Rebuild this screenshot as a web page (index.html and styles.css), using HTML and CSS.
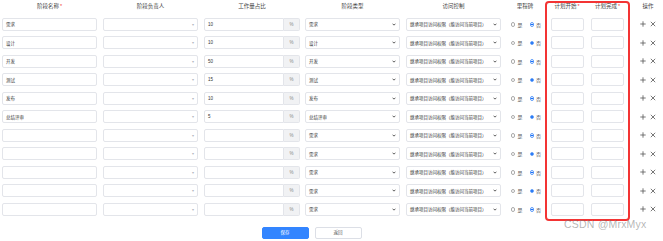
FILE: index.html
```html
<!DOCTYPE html>
<html lang="zh">

<head>
    <meta charset="UTF-8">
    <title>阶段计划</title>
    <link rel="stylesheet" href="styles.css">
</head>

<body>
    <div class="table">
        <!-- 表头 -->
        <div class="th">阶段名称<i>*</i></div>
        <div class="th">阶段负责人</div>
        <div class="th">工作量占比</div>
        <div class="th">阶段类型</div>
        <div class="th">访问控制</div>
        <div class="th">里程碑</div>
        <div class="th">计划开始<i>*</i></div>
        <div class="th">计划完成<i>*</i></div>
        <div class="th th-op">操作</div>
    </div>
    <div class="table" id="rows"></div>

    <div class="btns">
        <a href="javascript:;" class="btn btn-primary">保存</a>
        <a href="javascript:;" class="btn">返回</a>
    </div>

    <!-- 红色标注框 -->
    <div class="mark"></div>
    <div class="watermark">CSDN @MrxMyx</div>

    <script>
        // 阶段数据
        let stages = [
            ['需求', '10', '需求'],
            ['设计', '10', '设计'],
            ['开发', '50', '开发'],
            ['测试', '15', '测试'],
            ['发布', '10', '发布'],
            ['总结评审', '5', '总结评审'],
            ['', '', '需求'],
            ['', '', '需求'],
            ['', '', '需求'],
            ['', '', '需求'],
            ['', '', '需求']
        ];
        let chevron = '<svg class="chev" viewBox="0 0 6 4" width="4" height="3"><path d="M0.8 0.8 L3 3 L5.2 0.8" fill="none" stroke="#333" stroke-width="1.2"/></svg>';
        let plus = '<svg viewBox="0 0 6 6" width="6" height="6"><path d="M3 0.3 V5.7 M0.3 3 H5.7" stroke="#555" stroke-width="0.8"/></svg>';
        let cross = '<svg viewBox="0 0 6 6" width="6" height="6"><path d="M0.8 0.8 L5.2 5.2 M5.2 0.8 L0.8 5.2" stroke="#555" stroke-width="0.8"/></svg>';
        let html = '';
        for (let i = 0; i < stages.length; i++) {
            let s = stages[i];
            html += '<div class="td"><div class="box w95">' + s[0] + '</div></div>' +
                '<div class="td"><div class="box w95 sel">&nbsp;<span class="caret">▾</span></div></div>' +
                '<div class="td"><div class="pct"><div class="box">' + s[1] + '</div><div class="addon">%</div></div></div>' +
                '<div class="td"><div class="box w95 sel">' + s[2] + chevron + '</div></div>' +
                '<div class="td"><div class="box w95 sel">继承项目访问权限（能访问当前项目）' + chevron + '</div></div>' +
                '<div class="td radios"><span class="radio"></span>是<span class="radio on"></span>否</div>' +
                '<div class="td"><div class="box w33"></div></div>' +
                '<div class="td"><div class="box w33"></div></div>' +
                '<div class="td ops">' + plus + cross + '</div>';
        }
        document.getElementById('rows').innerHTML = html;
    </script>
</body>

</html>
```

FILE: styles.css
```css
* {
    margin: 0;
    padding: 0;
    box-sizing: border-box;
}

a {
    text-decoration: none;
}

body {
    position: relative;
    width: 663px;
    height: 241px;
    overflow: hidden;
    background-color: #fff;
    color: #333;
    font-family: "Liberation Sans", "Noto Sans CJK SC", sans-serif;
}

.table {
    display: grid;
    grid-template-columns: 99px 103px 100px 101px 101px 42px 42px 39px 36px;
    grid-auto-rows: 18.5px;
}

.table:first-child {
    grid-auto-rows: 15px;
}

.th {
    height: 12px;
    line-height: 12px;
    text-align: center;
    font-size: 5.5px;
    color: #444;
}

.th i {
    font-style: normal;
    color: #f23c3c;
    margin-left: 1px;
}

.th-op {
    padding-left: 6px;
}

.td {
    display: flex;
    align-items: center;
    justify-content: center;
}

.box {
    position: relative;
    display: flex;
    align-items: center;
    height: 13px;
    padding-left: 3px;
    border: 1px solid #e3e5ea;
    border-radius: 2px;
    font-size: 4.5px;
    color: #333;
    white-space: nowrap;
}

.w95 {
    width: 95px;
}

.w33 {
    width: 33px;
}

.sel {
    justify-content: space-between;
    padding-right: 3px;
}

.caret {
    font-size: 4px;
    color: #b5b8bf;
}

.chev {
    display: block;
}

.pct {
    display: flex;
    width: 96px;
}

.pct .box {
    width: 80px;
    border-radius: 2px 0 0 2px;
}

.addon {
    display: flex;
    align-items: center;
    justify-content: center;
    width: 16px;
    height: 13px;
    border: 1px solid #e3e5ea;
    border-left: 0;
    border-radius: 0 2px 2px 0;
    background-color: #f1f2f4;
    font-size: 4.5px;
    color: #888;
}

.radios {
    font-size: 5px;
    color: #555;
    padding-left: 2px;
}

.radio {
    flex-shrink: 0;
    width: 4.5px;
    height: 4.5px;
    margin-right: 2px;
    border: 0.6px solid #aaa;
    border-radius: 50%;
}

.radio.on {
    margin-left: 7px;
    border: 1px solid #5d9bfa;
    background: radial-gradient(circle, #1a6ff5 55%, #fff 60%);
}

.ops {
    padding-left: 6px;
}

.ops svg {
    display: block;
    flex-shrink: 0;
}

.ops svg+svg {
    margin-left: 4px;
}

.btns {
    display: flex;
    justify-content: center;
    width: 623px;
    margin-top: 8.5px;
}

.btn {
    width: 47px;
    height: 12px;
    margin: 0 3px;
    line-height: 10px;
    text-align: center;
    font-size: 4.5px;
    color: #555;
    border: 1px solid #dcdfe6;
    border-radius: 2px;
    background-color: #fff;
}

.btn-primary {
    color: #fff;
    border-color: #3385ff;
    background-color: #3385ff;
}

.mark {
    position: absolute;
    left: 545px;
    top: 1px;
    width: 85px;
    height: 220px;
    border: 2px solid #f33434;
    border-radius: 4px;
}

.watermark {
    position: absolute;
    left: 564px;
    top: 218px;
    font-size: 10.5px;
    color: rgba(120, 120, 120, .55);
    letter-spacing: .2px;
}
```
